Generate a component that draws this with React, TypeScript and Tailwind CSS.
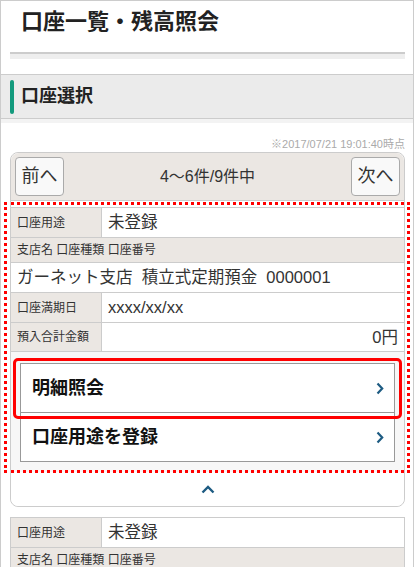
import React from "react";

const font = { fontFamily: '"Liberation Sans", "Noto Sans CJK JP", sans-serif' };

const ChevronRight = () => (
  <svg width="8" height="13" viewBox="0 0 8 13" fill="none">
    <path d="M1.5 1.5 L6.2 6.5 L1.5 11.5" stroke="#1d5b82" strokeWidth="2.2" />
  </svg>
);

const ChevronUp = () => (
  <svg width="14" height="9" viewBox="0 0 14 9" fill="none">
    <path d="M1.5 7.5 L7 2 L12.5 7.5" stroke="#1d5b82" strokeWidth="2.4" />
  </svg>
);

const AccountTable: React.FC = () => (
  <div className="border border-[#ccc] text-[#333]">
    <div className="flex h-[30px] border-b border-[#ccc]">
      <div className="flex w-[91px] items-center border-r border-[#ccc] bg-[#ebe7e3] pl-[6px] text-[12px]">
        口座用途
      </div>
      <div className="flex flex-1 items-center bg-white pl-[6px] text-[16.5px]">未登録</div>
    </div>
    <div className="flex h-[25px] items-center border-b border-[#ccc] bg-[#ebe7e3] pl-[6px] text-[12px]">
      支店名 口座種類 口座番号
    </div>
    <div className="flex h-[30px] items-center border-b border-[#ccc] bg-white pl-[6px] text-[16.5px]">
      ガーネット支店&nbsp;&nbsp;積立式定期預金&nbsp;&nbsp;0000001
    </div>
    <div className="flex h-[30px] border-b border-[#ccc]">
      <div className="flex w-[91px] items-center border-r border-[#ccc] bg-[#ebe7e3] pl-[6px] text-[12px]">
        口座満期日
      </div>
      <div className="flex flex-1 items-center bg-white pl-[6px] text-[16.5px]">xxxx/xx/xx</div>
    </div>
    <div className="flex h-[28px]">
      <div className="flex w-[91px] items-center border-r border-[#ccc] bg-[#ebe7e3] pl-[6px] text-[12px]">
        預入合計金額
      </div>
      <div className="flex flex-1 items-center justify-end bg-white pr-[6px] text-[16.5px]">0円</div>
    </div>
  </div>
);

export default function App() {
  return (
    <div className="min-h-[567px] border border-[#ccc] bg-white text-[#333]" style={font}>
      {/* Page title */}
      <div className="pt-[6px]">
        <h1 className="pl-[20px] text-[22px] font-bold leading-[30px] text-[#222]">口座一覧・残高照会</h1>
        <div className="ml-[9px] mr-[8px] mt-[15px] h-[7px] border-t-2 border-[#ccc] bg-[#eee]" />
      </div>

      {/* Section heading */}
      <div className="mt-[15px] border-y border-[#ccc] bg-[#ebebeb]">
        <div className="flex h-[43px] items-center pl-[9px]">
          <span className="h-[34px] w-[4px] rounded-full bg-[#139a7d]" />
          <h2 className="pl-[7px] text-[18px] font-bold text-[#222]">口座選択</h2>
        </div>
      </div>
      <div className="h-[4px] bg-[#f3f3f3]" />

      {/* Timestamp */}
      <p className="mt-[14px] pr-[8px] text-right text-[11px] leading-[14px] text-[#aaa]">
        ※2017/07/21 19:01:40時点
      </p>

      {/* Account card */}
      <div className="ml-[9px] mr-[8px] mt-[1px] rounded-[8px] border border-[#ccc]">
        <div className="flex h-[48px] items-center justify-between rounded-t-[8px] border-b border-[#ccc] bg-[#ebe7e3] px-[4px]">
          <button className="h-[39px] w-[49px] rounded-[4px] border border-[#aaa] bg-[#f9f9f9] text-[18px] text-[#333]">
            前へ
          </button>
          <span className="text-[16px] text-[#333]">4〜6件/9件中</span>
          <button className="h-[39px] w-[49px] rounded-[4px] border border-[#aaa] bg-[#f9f9f9] text-[18px] text-[#333]">
            次へ
          </button>
        </div>

        <div className="relative pt-[6px]">
          <div className="-mx-px">
            <AccountTable />
          </div>
          <div className="bg-[#f7f7f7] px-[9px] pb-[10px] pt-[11px]">
            <div className="relative">
              <button className="flex h-[50px] w-full items-center justify-between border border-[#999] bg-white pl-[11px] pr-[10px] text-[18px] font-bold text-[#111]">
                明細照会
                <ChevronRight />
              </button>
              <div className="pointer-events-none absolute -bottom-[6px] -left-[7px] -right-[7px] -top-[5px] rounded-[5px] border-[3px] border-[#f00]" />
            </div>
            <button className="flex h-[49px] w-full items-center justify-between border border-t-0 border-[#999] bg-white pl-[11px] pr-[10px] text-[18px] font-bold text-[#111]">
              口座用途を登録
              <ChevronRight />
            </button>
          </div>
          {/* dotted highlight */}
          <div className="pointer-events-none absolute -bottom-[1px] -left-[7px] -right-[6px] top-[1px] border-[3px] border-dotted border-[#f00]" />
        </div>

        <div className="flex h-[34px] items-center justify-center rounded-b-[8px] bg-white">
          <ChevronUp />
        </div>
      </div>

      {/* Next account */}
      <div className="ml-[9px] mr-[8px] mt-[10px]">
        <AccountTable />
      </div>
    </div>
  );
}
